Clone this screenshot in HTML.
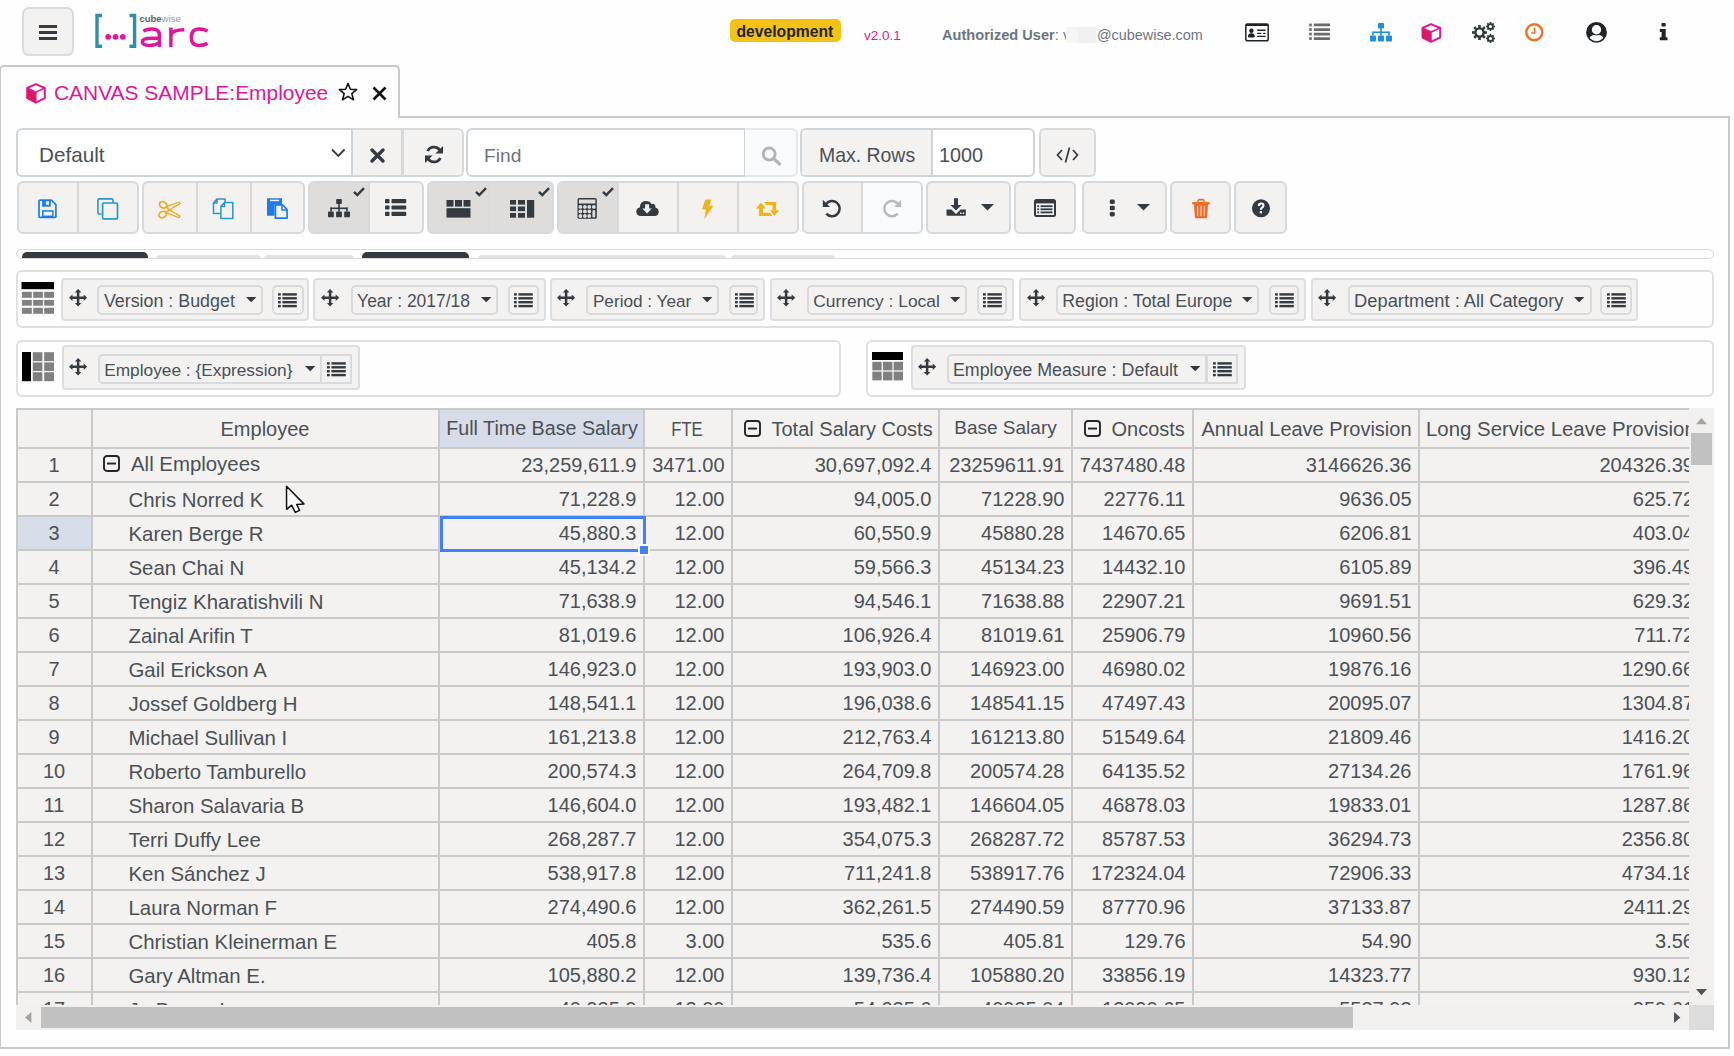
<!DOCTYPE html>
<html><head><meta charset="utf-8">
<style>
*{box-sizing:border-box}
html,body{margin:0;padding:0}
body{width:1734px;height:1056px;overflow:hidden;position:relative;background:#fefefe;font-family:"Liberation Sans",sans-serif;color:#3d4246}
.a{position:absolute}
svg{position:absolute;overflow:visible}
.bg{position:absolute;background:#f3f2f1;border:2px solid #d6d9dc;border-radius:6px}
.dv{position:absolute;top:0;bottom:0;width:2px;background:#d6d9dc}
.act{position:absolute;top:0;bottom:0;background:#dedddc}
.t{position:absolute;white-space:nowrap;line-height:1}
</style></head><body>

<!-- NAVBAR -->
<div class="a" style="left:22px;top:7px;width:52px;height:49px;background:#f3f2f1;border:2px solid #d9dcdf;border-radius:7px"></div>
<div class="a" style="left:39px;top:25px;width:18px;height:3px;background:#343a40"></div>
<div class="a" style="left:39px;top:31px;width:18px;height:3px;background:#343a40"></div>
<div class="a" style="left:39px;top:37px;width:18px;height:3px;background:#343a40"></div>

<!-- logo -->
<svg style="left:0;top:0" width="240" height="60">
  <path d="M102 15.5 H97 V46.3 H102" fill="none" stroke="#2f8fab" stroke-width="3.4"/>
  <path d="M129.5 15.5 H134.6 V46.3 H129.5" fill="none" stroke="#2f8fab" stroke-width="3.4"/>
  <circle cx="108.2" cy="36.8" r="2.9" fill="#e0169c"/>
  <circle cx="115.5" cy="36.8" r="2.9" fill="#e0169c"/>
  <circle cx="122.8" cy="36.8" r="2.9" fill="#e0169c"/>
  <text x="139.5" y="22" font-family="Liberation Sans" font-size="9.5" font-weight="bold" fill="#5d5d5d" textLength="22" lengthAdjust="spacingAndGlyphs">cube</text>
  <text x="161.5" y="22" font-family="Liberation Sans" font-size="9.5" fill="#9a9a9a" textLength="19.5" lengthAdjust="spacingAndGlyphs">wise</text>
  <g fill="none" stroke="#e0169c" stroke-width="3.5">
   <path d="M143.3 31 Q147 29 152 29 Q159.4 29 159.4 35 V47.1"/>
   <path d="M159.4 38.2 H150.5 Q142.3 38.2 142.3 42 Q142.3 45.4 149.5 45.4 Q155.5 45.4 159.4 42.6"/>
   <path d="M170.9 27.6 V47.1"/>
   <path d="M170.9 35 Q172.5 29.8 184.3 29.8"/>
   <path d="M207.6 31 Q204 29 198.7 29 Q191.3 29 191.3 37.3 Q191.3 45.4 198.7 45.4 Q204 45.4 207.6 43.4"/>
  </g>
</svg>

<div class="a" style="left:730px;top:19px;width:111px;height:23px;background:#f4c214;border-radius:5px"></div>
<div class="t" style="left:736.5px;top:24.2px;font-size:15.7px;font-weight:bold;color:#212529">development</div>
<div class="t" style="left:864px;top:28.6px;font-size:13.5px;color:#e0169c">v2.0.1</div>
<div class="t" style="left:942px;top:28px;font-size:14.6px;font-weight:bold;color:#6c757d">Authorized User<span style="font-weight:normal">:</span></div>
<div class="a" style="left:1094.5px;top:31px;width:1.2px;height:9px;background:#9aa0a5"></div>
<div class="t" style="left:1063px;top:28px;font-size:14.4px;color:#6c757d">v</div>
<div class="a" style="left:1066px;top:27px;width:12px;height:16px;background:#f6f5f5"></div>
<div class="a" style="left:1078px;top:27px;width:18px;height:16px;background:#eff0ef"></div>
<div class="t" style="left:1097px;top:28px;font-size:14.4px;color:#6c757d">@cubewise.com</div>

<!-- nav icons -->
<!-- id card -->
<svg style="left:1245px;top:23px" width="24" height="19" viewBox="0 0 24 19">
  <rect x="0.8" y="1.2" width="22.4" height="16.6" rx="1.8" fill="none" stroke="#1f2327" stroke-width="1.5"/>
  <rect x="0.5" y="0.5" width="23" height="2.6" rx="1" fill="#1f2327"/>
  <circle cx="6.4" cy="7.7" r="2.2" fill="#1f2327"/>
  <path d="M3 13.6 Q3 10.2 6.4 10.2 Q9.8 10.2 9.8 13.6 Q9.8 14.6 8.8 14.6 H4 Q3 14.6 3 13.6 Z" fill="#1f2327"/>
  <g fill="#1f2327">
  <rect x="12" y="6.6" width="8.7" height="1.3" rx="0.6"/>
  <rect x="12" y="9.7" width="4.5" height="1.3" rx="0.6"/><rect x="18" y="9.7" width="2.7" height="1.3" rx="0.6"/>
  <rect x="12" y="12.7" width="8.7" height="1.3" rx="0.6"/>
  </g>
</svg>
<!-- list -->
<svg style="left:1309px;top:23px" width="21" height="17" viewBox="0 0 21 17">
  <g fill="#6b6b6b">
  <rect x="0.2" y="0.6" width="2.6" height="2.7"/><rect x="4.8" y="0.6" width="16.2" height="2.7" rx="0.5"/>
  <rect x="0.2" y="5.2" width="2.6" height="2.7"/><rect x="4.8" y="5.2" width="16.2" height="2.7" rx="0.5"/>
  <rect x="0.2" y="9.7" width="2.6" height="2.7"/><rect x="4.8" y="9.7" width="16.2" height="2.7" rx="0.5"/>
  <rect x="0.2" y="14.2" width="2.6" height="2.7"/><rect x="4.8" y="14.2" width="16.2" height="2.7" rx="0.5"/>
  </g>
</svg>
<!-- sitemap blue -->
<svg style="left:1370px;top:23px" width="22" height="19" viewBox="0 0 22 19">
  <g fill="#1e8fe0">
  <rect x="8" y="0" width="6" height="5.5" rx="1"/>
  <rect x="10.2" y="5" width="1.6" height="4"/>
  <rect x="3" y="8.5" width="16" height="1.6"/>
  <rect x="2.2" y="8.5" width="1.6" height="4"/><rect x="10.2" y="8.5" width="1.6" height="4"/><rect x="18.2" y="8.5" width="1.6" height="4"/>
  <rect x="0" y="12.5" width="6" height="6" rx="1"/><rect x="8" y="12.5" width="6" height="6" rx="1"/><rect x="16" y="12.5" width="6" height="6" rx="1"/>
  </g>
</svg>
<!-- cube magenta -->
<svg style="left:1421px;top:23px" width="21" height="20" viewBox="0 0 21 20">
  <path d="M1.5 5 L10 1.2 L19.2 5 L19.2 14.5 L10 18.8 L1.5 14.5 Z" fill="#fff" stroke="#e0169c" stroke-width="2" stroke-linejoin="round"/>
  <path d="M1.5 5 L10 9 L10 18.8 L1.5 14.5 Z" fill="#d81b60"/>
  <path d="M1.5 5 L10 9 L19.2 5 M10 9 V18.8" fill="none" stroke="#e0169c" stroke-width="1.6"/>
</svg>
<!-- gears -->
<svg style="left:1472px;top:22px" width="24" height="21" viewBox="0 0 24 21">
  <g fill="#2f3b34">
  <circle cx="7.5" cy="10.5" r="5.3"/>
  <g stroke="#2f3b34" stroke-width="2.6">
   <line x1="7.5" y1="3" x2="7.5" y2="18"/><line x1="0" y1="10.5" x2="15" y2="10.5"/>
   <line x1="2.2" y1="5.2" x2="12.8" y2="15.8"/><line x1="2.2" y1="15.8" x2="12.8" y2="5.2"/>
  </g>
  <circle cx="18.5" cy="4.5" r="3.3"/><circle cx="18.5" cy="16.5" r="3.3"/>
  <g stroke="#2f3b34" stroke-width="1.7">
   <line x1="18.5" y1="0" x2="18.5" y2="9"/><line x1="14" y1="4.5" x2="23" y2="4.5"/>
   <line x1="15.3" y1="1.3" x2="21.7" y2="7.7"/><line x1="15.3" y1="7.7" x2="21.7" y2="1.3"/>
   <line x1="18.5" y1="12" x2="18.5" y2="21"/><line x1="14" y1="16.5" x2="23" y2="16.5"/>
   <line x1="15.3" y1="13.3" x2="21.7" y2="19.7"/><line x1="15.3" y1="19.7" x2="21.7" y2="13.3"/>
  </g>
  </g>
  <circle cx="7.5" cy="10.5" r="2.9" fill="#fefefe"/>
  <circle cx="18.5" cy="4.5" r="1.6" fill="#fefefe"/>
  <circle cx="18.5" cy="16.5" r="1.6" fill="#fefefe"/>
</svg>
<!-- clock -->
<svg style="left:1525px;top:23px" width="19" height="19" viewBox="0 0 19 19">
  <circle cx="9.3" cy="9.3" r="8" fill="none" stroke="#f07023" stroke-width="2.4"/>
  <path d="M9.6 4.5 V10 H6.2" fill="none" stroke="#f07023" stroke-width="1.7"/>
</svg>
<!-- user -->
<svg style="left:1586px;top:22px" width="22" height="22" viewBox="0 0 22 22">
  <defs><clipPath id="ucl"><circle cx="10.5" cy="10.4" r="8.8"/></clipPath></defs>
  <circle cx="10.5" cy="10.4" r="10.4" fill="#212529"/>
  <ellipse cx="10.5" cy="19.6" rx="8.4" ry="7.1" fill="#fefefe" clip-path="url(#ucl)"/>
  <circle cx="10.5" cy="7.7" r="5.8" fill="#212529"/>
  <circle cx="10.5" cy="7.7" r="4.7" fill="#fefefe"/>
</svg>
<!-- info -->
<svg style="left:1659px;top:23px" width="10" height="18" viewBox="0 0 10 18">
  <g fill="#1f2326">
  <rect x="2.5" y="0" width="4.2" height="3.5" rx="0.8"/>
  <path d="M0.8 6 H6.7 V14.3 H8.5 V17.3 H0.8 V14.3 H2.6 V9 H0.8 Z"/>
  </g>
</svg>

<!-- TAB -->
<div class="a" style="left:-1px;top:65px;width:401px;height:53px;border:2px solid #c9c9c9;border-bottom:none;border-radius:5px 5px 0 0;background:#fefefe"></div>
<!-- PANEL -->
<div class="a" style="left:-1px;top:116px;width:1731px;height:933px;border:2px solid #c9c9c9;border-top:none"></div>
<div class="a" style="left:398px;top:116px;width:1332px;height:2px;background:#c9c9c9"></div>
<!-- tab content -->
<svg style="left:26px;top:83px" width="20" height="21" viewBox="0 0 20 21">
  <path d="M1.2 5 L9.8 1.2 L18.8 5 L18.8 15.2 L9.8 19.6 L1.2 15.2 Z" fill="#fff" stroke="#e0169c" stroke-width="2" stroke-linejoin="round"/>
  <path d="M1.2 5 L9.8 9.2 L9.8 19.6 L1.2 15.2 Z" fill="#d81b60"/>
  <path d="M1.2 5 L9.8 9.2 L18.8 5 M9.8 9.2 V19.6" fill="none" stroke="#e0169c" stroke-width="1.6"/>
</svg>
<div class="t" style="left:54px;top:82.6px;font-size:20.95px;color:#e0169c">CANVAS SAMPLE:Employee</div>
<svg style="left:338px;top:82px" width="20" height="20" viewBox="0 0 20 20">
  <path d="M10 1.5 L12.4 7.3 L18.6 7.6 L13.8 11.6 L15.5 17.8 L10 14.3 L4.5 17.8 L6.2 11.6 L1.4 7.6 L7.6 7.3 Z" fill="none" stroke="#111" stroke-width="1.6" stroke-linejoin="round"/>
</svg>
<svg style="left:372px;top:86px" width="15" height="15" viewBox="0 0 15 15">
  <path d="M1.5 1.5 L13.5 13.5 M13.5 1.5 L1.5 13.5" stroke="#111" stroke-width="2.6"/>
</svg>

<!-- TOOLBAR ROW 1 -->

<!-- select -->
<div class="a" style="left:16px;top:128px;width:337px;height:49px;background:#fff;border:2px solid #cfd4d9;border-radius:6px 0 0 6px"></div>
<div class="t" style="left:39px;top:144.8px;font-size:20.7px;color:#495057">Default</div>
<svg style="left:331px;top:148px" width="15" height="10" viewBox="0 0 15 10"><path d="M1 1.5 L7.3 8 L13.6 1.5" fill="none" stroke="#343a40" stroke-width="1.8"/></svg>
<div class="bg" style="left:351px;top:128px;width:113px;height:49px;border-radius:0 6px 6px 0"></div>
<div class="a" style="left:351px;top:128px;width:2px;height:49px;background:#cfd4d9"></div>
<div class="a" style="left:401px;top:128px;width:3px;height:49px;background:#d6d9dc"></div>
<svg style="left:370px;top:148px" width="15" height="15" viewBox="0 0 15 15"><path d="M2 2 L13 13 M13 2 L2 13" stroke="#343a40" stroke-width="3.4" stroke-linecap="round"/></svg>
<svg style="left:424px;top:145px" width="20" height="19" viewBox="0 0 20 19">
 <path d="M16.6 7.2 A7 7 0 0 0 3.6 6" fill="none" stroke="#343a40" stroke-width="2.8"/>
 <path d="M3.4 11.8 A7 7 0 0 0 16.4 13" fill="none" stroke="#343a40" stroke-width="2.8"/>
 <path d="M19 1 V8.6 H11.4 Z" fill="#343a40"/>
 <path d="M1 18 V10.4 H8.6 Z" fill="#343a40"/>
</svg>
<!-- find -->
<div class="a" style="left:466px;top:128px;width:280px;height:49px;background:#fff;border:2px solid #cfd4d9;border-radius:6px 0 0 6px"></div>
<div class="t" style="left:484px;top:145.7px;font-size:19.2px;color:#6c757d">Find</div>
<div class="a" style="left:745px;top:128px;width:53px;height:49px;background:#f9fafb;border:2px solid #e6e8eb;border-left:none;border-radius:0 6px 6px 0"></div>
<svg style="left:761px;top:146px" width="21" height="19" viewBox="0 0 21 19"><circle cx="8.2" cy="8" r="6" fill="none" stroke="#b3b3b3" stroke-width="2.8"/><path d="M12.5 12.3 L18.5 18" stroke="#b3b3b3" stroke-width="3.2" stroke-linecap="round"/></svg>
<!-- max rows -->
<div class="a" style="left:800px;top:128px;width:235px;height:49px;background:#fff;border:2px solid #cfd4d9;border-radius:6px"></div>
<div class="a" style="left:802px;top:130px;width:129px;height:45px;background:#f3f2f1;border-radius:4px 0 0 4px"></div>
<div class="a" style="left:931px;top:130px;width:2px;height:45px;background:#cfd4d9"></div>
<div class="t" style="left:819px;top:145.8px;font-size:19.45px;color:#495057">Max. Rows</div>
<div class="t" style="left:939px;top:145.5px;font-size:19.8px;color:#4b5055">1000</div>
<div class="bg" style="left:1039px;top:128px;width:57px;height:49px"></div>
<svg style="left:1056px;top:146px" width="23" height="18" viewBox="0 0 23 18"><path d="M6 4 L1.5 9 L6 14 M17 4 L21.5 9 L17 14 M13.5 1.5 L9.5 16.5" fill="none" stroke="#343a40" stroke-width="1.7"/></svg>


<!-- TOOLBAR ROW 2 -->

<!-- group1 save/copy -->
<div class="bg" style="left:17px;top:181px;width:122px;height:53px"></div>
<div class="dv" style="left:77px;top:183px;height:49px"></div>
<svg style="left:38px;top:199px" width="20" height="20" viewBox="0 0 20 20">
 <path d="M2.2 1.1 H13.4 L17.9 5.6 V17.4 Q17.9 18.3 17 18.3 H1.9 Q1 18.3 1 17.4 V2.1 Q1 1.1 2.2 1.1 Z" fill="none" stroke="#1b7cf0" stroke-width="1.7" stroke-linejoin="round"/>
 <path d="M4.1 1.3 H12.8 V7.7 H4.1 Z" fill="#1b7cf0"/>
 <rect x="7.9" y="2.2" width="3.1" height="3.6" fill="#f3f2f1"/>
 <rect x="4.8" y="11.9" width="10.1" height="5.4" fill="none" stroke="#1b7cf0" stroke-width="1.5"/>
</svg>
<svg style="left:97px;top:198px" width="22" height="22" viewBox="0 0 22 22">
 <path d="M4.6 16 H2.3 Q0.9 16 0.9 14.6 V2.3 Q0.9 0.9 2.3 0.9 H14.6 Q16 0.9 16 2.3 V4.8" fill="none" stroke="#2a98c4" stroke-width="1.6"/>
 <rect x="5.6" y="5" width="14.9" height="15.8" rx="1" fill="none" stroke="#2a98c4" stroke-width="1.7"/>
</svg>
<!-- group2 cut/copy/paste -->
<div class="bg" style="left:142px;top:181px;width:163px;height:53px"></div>
<div class="dv" style="left:196px;top:183px;height:49px"></div>
<div class="dv" style="left:250px;top:183px;height:49px"></div>
<svg style="left:157px;top:200px" width="24" height="20" viewBox="0 0 24 20">
 <g fill="none" stroke="#f0a81c" stroke-width="1.7">
 <ellipse cx="6.2" cy="4.8" rx="3.9" ry="3" transform="rotate(28 6.2 4.8)"/>
 <ellipse cx="5.6" cy="14.6" rx="3.9" ry="3" transform="rotate(-28 5.6 14.6)"/>
 <path d="M9.3 6.8 L22 2 L23 3.6 L12 10 Z" stroke-width="1.3" stroke-linejoin="round"/>
 <path d="M9 12.6 L22 17.6 L23 16 L12 9.6 Z" stroke-width="1.3" stroke-linejoin="round"/>
 </g>
</svg>
<svg style="left:212px;top:198px" width="22" height="22" viewBox="0 0 22 22">
 <g fill="none" stroke="#2a98c4" stroke-width="1.5" stroke-linejoin="round">
 <path d="M5 1 H13.1 V4.5 M9 15.5 H1.5 V5 L5 1 V5 H1.5"/>
 <path d="M12 4.6 H20.8 V20.4 H8.9 V8.3 L12.6 4.6 V8.6 H8.9"/>
 </g>
</svg>
<svg style="left:266px;top:198px" width="23" height="22" viewBox="0 0 23 22">
 <path d="M1 0.3 H16 V6.2 H8.5 V17.8 H1 Z" fill="#1b7cf0"/>
 <rect x="4" y="1.7" width="9.2" height="1.5" fill="#f3f2f1"/>
 <path d="M9.4 6.9 H16.5 L21.1 11.5 V20.2 H9.4 Z" fill="#f3f2f1" stroke="#1b7cf0" stroke-width="1.7" stroke-linejoin="round"/>
 <path d="M16 6.9 V12 H21.1" fill="none" stroke="#1b7cf0" stroke-width="1.5"/>
</svg>
<!-- group3 sitemap/list -->
<div class="bg" style="left:308px;top:181px;width:116px;height:53px;overflow:hidden"><div class="act" style="left:0;width:60px"></div></div>
<div class="dv" style="left:368px;top:183px;height:49px"></div>
<svg style="left:328px;top:199px" width="22" height="19" viewBox="0 0 22 19"><g fill="#343a40">
 <rect x="8.2" y="0" width="5.6" height="5" rx="0.8"/><rect x="10.2" y="4.5" width="1.6" height="4.5"/>
 <rect x="2.5" y="8.5" width="17" height="1.6"/>
 <rect x="2.3" y="8.5" width="1.6" height="4"/><rect x="10.2" y="8.5" width="1.6" height="4"/><rect x="18.1" y="8.5" width="1.6" height="4"/>
 <rect x="0" y="12.5" width="5.8" height="5.8" rx="0.8"/><rect x="8.1" y="12.5" width="5.8" height="5.8" rx="0.8"/><rect x="16.2" y="12.5" width="5.8" height="5.8" rx="0.8"/>
</g></svg>
<svg style="left:385px;top:199px" width="22" height="18" viewBox="0 0 22 18"><g fill="#343a40">
 <rect x="0" y="0" width="4.5" height="4.2" rx="0.8"/><rect x="6.5" y="0" width="14.7" height="4.2" rx="0.8"/>
 <rect x="0" y="6.4" width="4.5" height="4.2" rx="0.8"/><rect x="6.5" y="6.4" width="14.7" height="4.2" rx="0.8"/>
 <rect x="0" y="12.8" width="4.5" height="4.2" rx="0.8"/><rect x="6.5" y="12.8" width="14.7" height="4.2" rx="0.8"/>
</g></svg>
<svg style="left:353px;top:187px" width="12" height="10" viewBox="0 0 12 10"><path d="M1 4.8 L4.3 8 L11 1.2" fill="none" stroke="#343a40" stroke-width="2.4"/></svg>
<!-- group4 tables -->
<div class="bg" style="left:427px;top:181px;width:127px;height:53px;background:#dedddc"></div>
<div class="dv" style="left:489px;top:183px;height:49px;background:#d8d8d8;width:1px"></div>
<svg style="left:446px;top:200px" width="26" height="18" viewBox="0 0 26 18"><g fill="#343a40">
 <rect x="0.5" y="0" width="7" height="6.6"/><rect x="9" y="0" width="7" height="6.6"/><rect x="17.5" y="0" width="7" height="6.6"/>
 <rect x="0.5" y="8.2" width="24" height="9.4"/>
</g></svg>
<svg style="left:510px;top:200px" width="26" height="18" viewBox="0 0 26 18"><g fill="#343a40">
 <rect x="0" y="0" width="6" height="4.6"/><rect x="8" y="0" width="7" height="4.6"/>
 <rect x="0" y="6.5" width="6" height="4.6"/><rect x="8" y="6.5" width="7" height="4.6"/>
 <rect x="0" y="13" width="6" height="4.7"/><rect x="8" y="13" width="7" height="4.7"/>
 <rect x="17" y="0" width="7.2" height="17.7"/>
</g></svg>
<svg style="left:475px;top:187px" width="12" height="10" viewBox="0 0 12 10"><path d="M1 4.8 L4.3 8 L11 1.2" fill="none" stroke="#343a40" stroke-width="2.4"/></svg>
<svg style="left:538px;top:187px" width="12" height="10" viewBox="0 0 12 10"><path d="M1 4.8 L4.3 8 L11 1.2" fill="none" stroke="#343a40" stroke-width="2.4"/></svg>
<!-- group5 calc/cloud/bolt/retweet -->
<div class="bg" style="left:557px;top:181px;width:242px;height:53px;overflow:hidden"><div class="act" style="left:0;width:60px"></div></div>
<div class="dv" style="left:617px;top:183px;height:49px"></div>
<div class="dv" style="left:677px;top:183px;height:49px"></div>
<div class="dv" style="left:737px;top:183px;height:49px"></div>
<svg style="left:577px;top:198px" width="20" height="21" viewBox="0 0 20 21">
 <rect x="0.5" y="0.1" width="19.3" height="20.7" rx="1.6" fill="#343a40"/>
 <rect x="1.9" y="1.5" width="16.5" height="4" fill="#dedddc"/>
 <g fill="#dedddc">
 <circle cx="3.4" cy="8.9" r="1.9"/><circle cx="7.9" cy="8.9" r="1.9"/><circle cx="12.3" cy="8.9" r="1.9"/><circle cx="16.8" cy="8.9" r="1.9"/>
 <circle cx="3.4" cy="13.4" r="1.9"/><circle cx="7.9" cy="13.4" r="1.9"/><circle cx="12.3" cy="13.4" r="1.9"/>
 <circle cx="3.4" cy="18" r="1.9"/><circle cx="7.9" cy="18" r="1.9"/><circle cx="12.3" cy="18" r="1.9"/>
 <rect x="15.4" y="12" width="2.8" height="7.6" rx="1.4"/>
 </g>
</svg>
<svg style="left:602px;top:187px" width="12" height="10" viewBox="0 0 12 10"><path d="M1 4.8 L4.3 8 L11 1.2" fill="none" stroke="#343a40" stroke-width="2.4"/></svg>
<svg style="left:636px;top:199px" width="23" height="18" viewBox="0 0 23 18">
 <path d="M5 17 Q0.3 17 0.3 12.6 Q0.3 9 3.8 8.4 Q4 3 9 2 Q13.5 1.3 15.6 5.2 Q17 4.4 18.3 5.2 Q19.8 6.4 19.4 8.4 Q22.7 9.4 22.7 12.8 Q22.7 17 18.2 17 Z" fill="#343a40"/>
 <path d="M9.1 5.2 H13.1 V9.4 H15.9 L11.1 14.4 L6.3 9.4 H9.1 Z" fill="#f3f2f1"/>
</svg>
<svg style="left:701px;top:199px" width="13" height="21" viewBox="0 0 13 21">
 <path d="M4.4 0.5 H10.5 L8.2 6.8 H12.5 L3.2 20.5 L5 10.4 H1 Z" fill="#f0b321"/>
</svg>
<svg style="left:756px;top:201px" width="24" height="16" viewBox="0 0 24 16"><g fill="#f2b218">
 <path d="M0 7.6 H9.9 L4.9 1.4 Z"/>
 <path d="M3.1 7 H6.9 V11.8 H14.2 L16.1 15.1 H3.1 Z"/>
 <path d="M7.9 1 H20.1 V9.5 H16.5 V4.1 H10.6 Z"/>
 <path d="M14 9.2 H23.1 L18.5 14.9 Z"/>
</g></svg>
<!-- group6 undo/redo -->
<div class="bg" style="left:802px;top:181px;width:121px;height:53px;overflow:hidden"><div class="a" style="left:59px;top:0;bottom:0;right:0;background:#f9fafb"></div></div>
<div class="dv" style="left:861px;top:183px;height:49px"></div>
<svg style="left:822px;top:199px" width="20" height="19" viewBox="0 0 20 19">
 <path d="M4 5 A7.6 7.6 0 1 1 4.3 14.6" fill="none" stroke="#343a40" stroke-width="2.5"/>
 <path d="M0.8 0.8 V8 H8 Z" fill="#343a40"/>
</svg>
<svg style="left:882px;top:199px" width="20" height="19" viewBox="0 0 20 19">
 <path d="M16 5 A7.6 7.6 0 1 0 15.7 14.6" fill="none" stroke="#b9b9b9" stroke-width="2.5"/>
 <path d="M19.2 0.8 V8 H12 Z" fill="#b9b9b9"/>
</svg>
<!-- group7 download -->
<div class="bg" style="left:926px;top:181px;width:85px;height:53px"></div>
<svg style="left:946px;top:198px" width="21" height="19" viewBox="0 0 21 19">
 <path d="M8 0.3 H12 V7 H15.5 L10 12.5 L4.5 7 H8 Z" fill="#343a40"/>
 <path d="M0.5 11.5 H5.5 L10 16 L14.5 11.5 H19.8 V17 Q19.8 17.8 19 17.8 H1.3 Q0.5 17.8 0.5 17 Z" fill="#343a40"/>
 <rect x="14" y="14.5" width="1.5" height="1.5" fill="#f3f2f1"/><rect x="16.6" y="14.5" width="1.5" height="1.5" fill="#f3f2f1"/>
</svg>
<svg style="left:981px;top:204px" width="14" height="7" viewBox="0 0 14 7"><path d="M0 0 H13 L6.5 6.5 Z" fill="#343a40"/></svg>
<!-- group8 list-alt -->
<div class="bg" style="left:1014px;top:181px;width:62px;height:53px"></div>
<svg style="left:1034px;top:199px" width="22" height="18" viewBox="0 0 22 18">
 <rect x="1" y="1" width="20" height="16" rx="1.5" fill="none" stroke="#343a40" stroke-width="2"/>
 <rect x="1" y="1" width="20" height="3.4" fill="#343a40"/>
 <g fill="#343a40"><rect x="3.3" y="6.3" width="1.8" height="1.8"/><rect x="6.5" y="6.3" width="12" height="1.8"/>
 <rect x="3.3" y="9.4" width="1.8" height="1.8"/><rect x="6.5" y="9.4" width="12" height="1.8"/>
 <rect x="3.3" y="12.5" width="1.8" height="1.8"/><rect x="6.5" y="12.5" width="12" height="1.8"/></g>
</svg>
<!-- group9 ellipsis -->
<div class="bg" style="left:1082px;top:181px;width:85px;height:53px"></div>
<svg style="left:1109px;top:199px" width="7" height="18" viewBox="0 0 7 18"><g fill="#343a40">
 <rect x="0.8" y="0.5" width="5" height="4.6" rx="1.4"/><rect x="0.8" y="6.7" width="5" height="4.6" rx="1.4"/><rect x="0.8" y="12.9" width="5" height="4.6" rx="1.4"/>
</g></svg>
<svg style="left:1137px;top:204px" width="14" height="7" viewBox="0 0 14 7"><path d="M0 0 H13 L6.5 6.5 Z" fill="#343a40"/></svg>
<!-- trash -->
<div class="bg" style="left:1170px;top:181px;width:61px;height:53px"></div>
<svg style="left:1192px;top:199px" width="18" height="20" viewBox="0 0 18 20">
 <path d="M6 2.8 V2 Q6 0.6 7.4 0.6 H10.6 Q12 0.6 12 2 V2.8" fill="none" stroke="#ef6c28" stroke-width="1.6"/>
 <rect x="0.2" y="3" width="17.5" height="2.4" fill="#ef6c28"/>
 <path d="M2 5 H16 L15.2 18 Q15.1 19.2 14 19.2 H4 Q2.9 19.2 2.8 18 Z" fill="#ef6c28"/>
 <g fill="#f7c7a8"><rect x="5" y="7" width="1.3" height="10"/><rect x="8.3" y="7" width="1.3" height="10"/><rect x="11.6" y="7" width="1.3" height="10"/></g>
</svg>
<!-- help -->
<div class="bg" style="left:1234px;top:181px;width:53px;height:53px"></div>
<svg style="left:1251px;top:199px" width="20" height="20" viewBox="0 0 20 20">
 <circle cx="10" cy="9.3" r="9" fill="#343a40"/>
 <path d="M6.8 7 Q6.8 3.6 10.2 3.6 Q13.5 3.6 13.5 6.6 Q13.5 8.5 11.5 9.4 Q10.9 9.8 10.9 10.8 H8.9 Q8.9 8.8 10.2 8.1 Q11.4 7.4 11.4 6.6 Q11.4 5.5 10.1 5.5 Q8.9 5.5 8.8 7 Z" fill="#fff"/>
 <rect x="8.8" y="12" width="2.2" height="2.3" fill="#fff"/>
</svg>


<!-- FILTERS -->
<div class="a" style="left:16px;top:249px;width:1698px;height:10px;border:1.8px solid #dadada;border-radius:5px;overflow:hidden"><div class="a" style="left:4.5px;top:2.4px;width:126px;height:12px;background:#343a40;border-radius:5px 5px 0 0"></div><div class="a" style="left:138.5px;top:4.5px;width:105px;height:12px;background:#e2e2e2;border-radius:4px 4px 0 0"></div><div class="a" style="left:247px;top:4.5px;width:90px;height:12px;background:#e2e2e2;border-radius:4px 4px 0 0"></div><div class="a" style="left:344.5px;top:2.4px;width:107.5px;height:12px;background:#343a40;border-radius:5px 5px 0 0"></div><div class="a" style="left:460.5px;top:4.5px;width:248px;height:12px;background:#e2e2e2;border-radius:4px 4px 0 0"></div><div class="a" style="left:713.5px;top:4.5px;width:104px;height:12px;background:#e2e2e2;border-radius:4px 4px 0 0"></div></div>
<div class="a" style="left:16px;top:270px;width:1698px;height:58px;border:2px solid #e0e0e0;border-radius:6px"></div>
<svg style="left:21px;top:282px" width="34" height="33" viewBox="0 0 34 33">
 <rect x="0.5" y="0" width="32.5" height="7.2" fill="#000"/>
 <g fill="#808080">
 <rect x="1" y="9.8" width="9.8" height="6"/><rect x="12.2" y="9.8" width="9.7" height="6"/><rect x="23.2" y="9.8" width="9.8" height="6"/>
 <rect x="1" y="17.9" width="9.8" height="5.8"/><rect x="12.2" y="17.9" width="9.7" height="5.8"/><rect x="23.2" y="17.9" width="9.8" height="5.8"/>
 <rect x="1" y="25.8" width="9.8" height="6"/><rect x="12.2" y="25.8" width="9.7" height="6"/><rect x="23.2" y="25.8" width="9.8" height="6"/>
 </g></svg>
<div class="bg" style="left:61.4px;top:277.5px;width:247.6px;height:43.2px;border-color:#dcdee1;border-radius:4px"></div>
<svg style="left:69.2px;top:288.8px" width="19" height="18" viewBox="0 0 19 18"><g fill="#343a40">
 <path d="M9.1 0 L12.4 3.5 H10.35 V7.6 H14.7 V5.5 L18.2 8.8 L14.7 12.1 V10 H10.35 V14.1 H12.4 L9.1 17.6 L5.8 14.1 H7.85 V10 H3.5 V12.1 L0 8.8 L3.5 5.5 V7.6 H7.85 V3.5 H5.8 Z"/></g></svg>
<div class="bg" style="left:97.4px;top:285.4px;width:166.1px;height:29.6px;border-color:#d8dbde;border-radius:5px"></div>
<div class="t" style="left:103.9px;top:292.8px;font-size:17.85px;color:#495057">Version : Budget</div>
<svg style="left:246.0px;top:296.8px" width="11" height="6" viewBox="0 0 11 6"><path d="M0 0 H10.4 L5.2 5.2 Z" fill="#343a40"/></svg>
<div class="bg" style="left:272.1px;top:285.4px;width:31.7px;height:29.6px;border-color:#d8dbde;border-radius:5px"></div>
<svg style="left:278.3px;top:292.6px" width="19" height="15" viewBox="0 0 19 15"><g fill="#343a40">
 <rect x="0" y="0.2" width="2.8" height="2.4"/><rect x="4.4" y="0.2" width="14.4" height="2.4"/>
 <rect x="0" y="4.1" width="2.8" height="2.4"/><rect x="4.4" y="4.1" width="14.4" height="2.4"/>
 <rect x="0" y="8" width="2.8" height="2.4"/><rect x="4.4" y="8" width="14.4" height="2.4"/>
 <rect x="0" y="11.9" width="2.8" height="2.4"/><rect x="4.4" y="11.9" width="14.4" height="2.4"/>
</g></svg>
<div class="bg" style="left:313.4px;top:277.5px;width:232.3px;height:43.2px;border-color:#dcdee1;border-radius:4px"></div>
<svg style="left:321.2px;top:288.8px" width="19" height="18" viewBox="0 0 19 18"><g fill="#343a40">
 <path d="M9.1 0 L12.4 3.5 H10.35 V7.6 H14.7 V5.5 L18.2 8.8 L14.7 12.1 V10 H10.35 V14.1 H12.4 L9.1 17.6 L5.8 14.1 H7.85 V10 H3.5 V12.1 L0 8.8 L3.5 5.5 V7.6 H7.85 V3.5 H5.8 Z"/></g></svg>
<div class="bg" style="left:350.6px;top:285.4px;width:147.9px;height:29.6px;border-color:#d8dbde;border-radius:5px"></div>
<div class="t" style="left:357.1px;top:293.1px;font-size:17.47px;color:#495057">Year : 2017/18</div>
<svg style="left:481.0px;top:296.8px" width="11" height="6" viewBox="0 0 11 6"><path d="M0 0 H10.4 L5.2 5.2 Z" fill="#343a40"/></svg>
<div class="bg" style="left:507.6px;top:285.4px;width:31.0px;height:29.6px;border-color:#d8dbde;border-radius:5px"></div>
<svg style="left:513.8px;top:292.6px" width="19" height="15" viewBox="0 0 19 15"><g fill="#343a40">
 <rect x="0" y="0.2" width="2.8" height="2.4"/><rect x="4.4" y="0.2" width="14.4" height="2.4"/>
 <rect x="0" y="4.1" width="2.8" height="2.4"/><rect x="4.4" y="4.1" width="14.4" height="2.4"/>
 <rect x="0" y="8" width="2.8" height="2.4"/><rect x="4.4" y="8" width="14.4" height="2.4"/>
 <rect x="0" y="11.9" width="2.8" height="2.4"/><rect x="4.4" y="11.9" width="14.4" height="2.4"/>
</g></svg>
<div class="bg" style="left:549.5px;top:277.5px;width:215.9px;height:43.2px;border-color:#dcdee1;border-radius:4px"></div>
<svg style="left:557.3px;top:288.8px" width="19" height="18" viewBox="0 0 19 18"><g fill="#343a40">
 <path d="M9.1 0 L12.4 3.5 H10.35 V7.6 H14.7 V5.5 L18.2 8.8 L14.7 12.1 V10 H10.35 V14.1 H12.4 L9.1 17.6 L5.8 14.1 H7.85 V10 H3.5 V12.1 L0 8.8 L3.5 5.5 V7.6 H7.85 V3.5 H5.8 Z"/></g></svg>
<div class="bg" style="left:586.4px;top:285.4px;width:132.6px;height:29.6px;border-color:#d8dbde;border-radius:5px"></div>
<div class="t" style="left:592.9px;top:293.3px;font-size:17.21px;color:#495057">Period : Year</div>
<svg style="left:701.5px;top:296.8px" width="11" height="6" viewBox="0 0 11 6"><path d="M0 0 H10.4 L5.2 5.2 Z" fill="#343a40"/></svg>
<div class="bg" style="left:728.6px;top:285.4px;width:29.7px;height:29.6px;border-color:#d8dbde;border-radius:5px"></div>
<svg style="left:734.8px;top:292.6px" width="19" height="15" viewBox="0 0 19 15"><g fill="#343a40">
 <rect x="0" y="0.2" width="2.8" height="2.4"/><rect x="4.4" y="0.2" width="14.4" height="2.4"/>
 <rect x="0" y="4.1" width="2.8" height="2.4"/><rect x="4.4" y="4.1" width="14.4" height="2.4"/>
 <rect x="0" y="8" width="2.8" height="2.4"/><rect x="4.4" y="8" width="14.4" height="2.4"/>
 <rect x="0" y="11.9" width="2.8" height="2.4"/><rect x="4.4" y="11.9" width="14.4" height="2.4"/>
</g></svg>
<div class="bg" style="left:769.5px;top:277.5px;width:244.8px;height:43.2px;border-color:#dcdee1;border-radius:4px"></div>
<svg style="left:777.3px;top:288.8px" width="19" height="18" viewBox="0 0 19 18"><g fill="#343a40">
 <path d="M9.1 0 L12.4 3.5 H10.35 V7.6 H14.7 V5.5 L18.2 8.8 L14.7 12.1 V10 H10.35 V14.1 H12.4 L9.1 17.6 L5.8 14.1 H7.85 V10 H3.5 V12.1 L0 8.8 L3.5 5.5 V7.6 H7.85 V3.5 H5.8 Z"/></g></svg>
<div class="bg" style="left:806.7px;top:285.4px;width:160.6px;height:29.6px;border-color:#d8dbde;border-radius:5px"></div>
<div class="t" style="left:813.2px;top:293.2px;font-size:17.4px;color:#495057">Currency : Local</div>
<svg style="left:949.8px;top:296.8px" width="11" height="6" viewBox="0 0 11 6"><path d="M0 0 H10.4 L5.2 5.2 Z" fill="#343a40"/></svg>
<div class="bg" style="left:976.6px;top:285.4px;width:30.8px;height:29.6px;border-color:#d8dbde;border-radius:5px"></div>
<svg style="left:982.8px;top:292.6px" width="19" height="15" viewBox="0 0 19 15"><g fill="#343a40">
 <rect x="0" y="0.2" width="2.8" height="2.4"/><rect x="4.4" y="0.2" width="14.4" height="2.4"/>
 <rect x="0" y="4.1" width="2.8" height="2.4"/><rect x="4.4" y="4.1" width="14.4" height="2.4"/>
 <rect x="0" y="8" width="2.8" height="2.4"/><rect x="4.4" y="8" width="14.4" height="2.4"/>
 <rect x="0" y="11.9" width="2.8" height="2.4"/><rect x="4.4" y="11.9" width="14.4" height="2.4"/>
</g></svg>
<div class="bg" style="left:1018.7px;top:277.5px;width:287.5px;height:43.2px;border-color:#dcdee1;border-radius:4px"></div>
<svg style="left:1026.5px;top:288.8px" width="19" height="18" viewBox="0 0 19 18"><g fill="#343a40">
 <path d="M9.1 0 L12.4 3.5 H10.35 V7.6 H14.7 V5.5 L18.2 8.8 L14.7 12.1 V10 H10.35 V14.1 H12.4 L9.1 17.6 L5.8 14.1 H7.85 V10 H3.5 V12.1 L0 8.8 L3.5 5.5 V7.6 H7.85 V3.5 H5.8 Z"/></g></svg>
<div class="bg" style="left:1055.8px;top:285.4px;width:203.3px;height:29.6px;border-color:#d8dbde;border-radius:5px"></div>
<div class="t" style="left:1062.3px;top:292.9px;font-size:17.72px;color:#495057">Region : Total Europe</div>
<svg style="left:1241.6px;top:296.8px" width="11" height="6" viewBox="0 0 11 6"><path d="M0 0 H10.4 L5.2 5.2 Z" fill="#343a40"/></svg>
<div class="bg" style="left:1268.7px;top:285.4px;width:30.6px;height:29.6px;border-color:#d8dbde;border-radius:5px"></div>
<svg style="left:1274.9px;top:292.6px" width="19" height="15" viewBox="0 0 19 15"><g fill="#343a40">
 <rect x="0" y="0.2" width="2.8" height="2.4"/><rect x="4.4" y="0.2" width="14.4" height="2.4"/>
 <rect x="0" y="4.1" width="2.8" height="2.4"/><rect x="4.4" y="4.1" width="14.4" height="2.4"/>
 <rect x="0" y="8" width="2.8" height="2.4"/><rect x="4.4" y="8" width="14.4" height="2.4"/>
 <rect x="0" y="11.9" width="2.8" height="2.4"/><rect x="4.4" y="11.9" width="14.4" height="2.4"/>
</g></svg>
<div class="bg" style="left:1310.5px;top:277.5px;width:327.4px;height:43.2px;border-color:#dcdee1;border-radius:4px"></div>
<svg style="left:1318.3px;top:288.8px" width="19" height="18" viewBox="0 0 19 18"><g fill="#343a40">
 <path d="M9.1 0 L12.4 3.5 H10.35 V7.6 H14.7 V5.5 L18.2 8.8 L14.7 12.1 V10 H10.35 V14.1 H12.4 L9.1 17.6 L5.8 14.1 H7.85 V10 H3.5 V12.1 L0 8.8 L3.5 5.5 V7.6 H7.85 V3.5 H5.8 Z"/></g></svg>
<div class="bg" style="left:1347.6px;top:285.4px;width:244.0px;height:29.6px;border-color:#d8dbde;border-radius:5px"></div>
<div class="t" style="left:1354.1px;top:292.4px;font-size:18.3px;color:#495057">Department : All Category</div>
<svg style="left:1574.1px;top:296.8px" width="11" height="6" viewBox="0 0 11 6"><path d="M0 0 H10.4 L5.2 5.2 Z" fill="#343a40"/></svg>
<div class="bg" style="left:1600.4px;top:285.4px;width:31.3px;height:29.6px;border-color:#d8dbde;border-radius:5px"></div>
<svg style="left:1606.6px;top:292.6px" width="19" height="15" viewBox="0 0 19 15"><g fill="#343a40">
 <rect x="0" y="0.2" width="2.8" height="2.4"/><rect x="4.4" y="0.2" width="14.4" height="2.4"/>
 <rect x="0" y="4.1" width="2.8" height="2.4"/><rect x="4.4" y="4.1" width="14.4" height="2.4"/>
 <rect x="0" y="8" width="2.8" height="2.4"/><rect x="4.4" y="8" width="14.4" height="2.4"/>
 <rect x="0" y="11.9" width="2.8" height="2.4"/><rect x="4.4" y="11.9" width="14.4" height="2.4"/>
</g></svg>
<div class="a" style="left:16px;top:339.5px;width:825px;height:57px;border:2px solid #e0e0e0;border-radius:6px"></div>
<svg style="left:22px;top:351.5px" width="33" height="30" viewBox="0 0 33 30">
 <rect x="0" y="0" width="9" height="29.2" fill="#000"/>
 <g fill="#808080">
 <rect x="10.8" y="0.2" width="9.6" height="9"/><rect x="22.2" y="0.2" width="9.8" height="9"/>
 <rect x="10.8" y="10.4" width="9.6" height="8.6"/><rect x="22.2" y="10.4" width="9.8" height="8.6"/>
 <rect x="10.8" y="20.2" width="9.6" height="9"/><rect x="22.2" y="20.2" width="9.8" height="9"/>
 </g></svg>
<div class="bg" style="left:61.5px;top:345.2px;width:298px;height:44.5px;border-color:#dcdee1;border-radius:4px"></div>
<svg style="left:69.3px;top:357.8px" width="19" height="18" viewBox="0 0 19 18"><g fill="#343a40">
 <path d="M9.1 0 L12.4 3.5 H10.35 V7.6 H14.7 V5.5 L18.2 8.8 L14.7 12.1 V10 H10.35 V14.1 H12.4 L9.1 17.6 L5.8 14.1 H7.85 V10 H3.5 V12.1 L0 8.8 L3.5 5.5 V7.6 H7.85 V3.5 H5.8 Z"/></g></svg>
<div class="bg" style="left:97.6px;top:354.1px;width:224.4px;height:29.7px;border-color:#d8dbde;border-radius:5px 0 0 5px"></div>
<div class="t" style="left:104.2px;top:362.4px;font-size:17.3px;color:#495057">Employee : {Expression}</div>
<svg style="left:304.5px;top:365.8px" width="11" height="6" viewBox="0 0 11 6"><path d="M0 0 H10.4 L5.2 5.2 Z" fill="#343a40"/></svg>
<div class="bg" style="left:320px;top:354.1px;width:32px;height:29.7px;border-color:#d8dbde;border-radius:0"></div>
<svg style="left:326.5px;top:361.8px" width="19" height="15" viewBox="0 0 19 15"><g fill="#343a40">
 <rect x="0" y="0.2" width="2.8" height="2.4"/><rect x="4.4" y="0.2" width="14.4" height="2.4"/>
 <rect x="0" y="4.1" width="2.8" height="2.4"/><rect x="4.4" y="4.1" width="14.4" height="2.4"/>
 <rect x="0" y="8" width="2.8" height="2.4"/><rect x="4.4" y="8" width="14.4" height="2.4"/>
 <rect x="0" y="11.9" width="2.8" height="2.4"/><rect x="4.4" y="11.9" width="14.4" height="2.4"/>
</g></svg>
<div class="a" style="left:865.5px;top:339.5px;width:848.5px;height:57px;border:2px solid #e0e0e0;border-radius:6px"></div>
<svg style="left:871.5px;top:352.3px" width="32" height="29" viewBox="0 0 32 29">
 <rect x="0" y="0" width="31" height="8" fill="#000"/>
 <g fill="#808080">
 <rect x="0.3" y="9.8" width="9.4" height="8.6"/><rect x="11" y="9.8" width="9.4" height="8.6"/><rect x="21.6" y="9.8" width="9.4" height="8.6"/>
 <rect x="0.3" y="19.6" width="9.4" height="8.8"/><rect x="11" y="19.6" width="9.4" height="8.8"/><rect x="21.6" y="19.6" width="9.4" height="8.8"/>
 </g></svg>
<div class="bg" style="left:910.6px;top:345.2px;width:335px;height:44.5px;border-color:#dcdee1;border-radius:4px"></div>
<svg style="left:918.3px;top:357.8px" width="19" height="18" viewBox="0 0 19 18"><g fill="#343a40">
 <path d="M9.1 0 L12.4 3.5 H10.35 V7.6 H14.7 V5.5 L18.2 8.8 L14.7 12.1 V10 H10.35 V14.1 H12.4 L9.1 17.6 L5.8 14.1 H7.85 V10 H3.5 V12.1 L0 8.8 L3.5 5.5 V7.6 H7.85 V3.5 H5.8 Z"/></g></svg>
<div class="bg" style="left:946.9px;top:354.1px;width:260px;height:29.7px;border-color:#d8dbde;border-radius:5px 0 0 5px"></div>
<div class="t" style="left:952.9px;top:361.9px;font-size:17.85px;color:#495057">Employee Measure : Default</div>
<svg style="left:1189.5px;top:365.8px" width="11" height="6" viewBox="0 0 11 6"><path d="M0 0 H10.4 L5.2 5.2 Z" fill="#343a40"/></svg>
<div class="bg" style="left:1205.5px;top:354.1px;width:32px;height:29.7px;border-color:#d8dbde;border-radius:0"></div>
<svg style="left:1212.5px;top:361.8px" width="19" height="15" viewBox="0 0 19 15"><g fill="#343a40">
 <rect x="0" y="0.2" width="2.8" height="2.4"/><rect x="4.4" y="0.2" width="14.4" height="2.4"/>
 <rect x="0" y="4.1" width="2.8" height="2.4"/><rect x="4.4" y="4.1" width="14.4" height="2.4"/>
 <rect x="0" y="8" width="2.8" height="2.4"/><rect x="4.4" y="8" width="14.4" height="2.4"/>
 <rect x="0" y="11.9" width="2.8" height="2.4"/><rect x="4.4" y="11.9" width="14.4" height="2.4"/>
</g></svg>
<!-- GRID -->
<div class="a" style="left:16px;top:408px;width:1673px;height:597px;background:#f3f2f1;overflow:hidden">
<div class="a" style="left:424px;top:2px;width:203px;height:37px;background:#d6dde9"></div>
<div class="a" style="left:2px;top:109px;width:73px;height:32px;background:#d6dde9"></div>
<div class="a" style="left:0px;top:0;width:2px;height:597px;background:#c9c9c9"></div>
<div class="a" style="left:75px;top:0;width:2px;height:597px;background:#c9c9c9"></div>
<div class="a" style="left:422px;top:0;width:2px;height:597px;background:#c9c9c9"></div>
<div class="a" style="left:627px;top:0;width:2px;height:597px;background:#c9c9c9"></div>
<div class="a" style="left:715px;top:0;width:2px;height:597px;background:#c9c9c9"></div>
<div class="a" style="left:922px;top:0;width:2px;height:597px;background:#c9c9c9"></div>
<div class="a" style="left:1055px;top:0;width:2px;height:597px;background:#c9c9c9"></div>
<div class="a" style="left:1176px;top:0;width:2px;height:597px;background:#c9c9c9"></div>
<div class="a" style="left:1402px;top:0;width:2px;height:597px;background:#c9c9c9"></div>
<div class="a" style="left:0;top:0px;width:1673px;height:2px;background:#c9c9c9"></div>
<div class="a" style="left:0;top:39px;width:1673px;height:2px;background:#c9c9c9"></div>
<div class="a" style="left:0;top:73px;width:1673px;height:2px;background:#c9c9c9"></div>
<div class="a" style="left:0;top:107px;width:1673px;height:2px;background:#c9c9c9"></div>
<div class="a" style="left:0;top:141px;width:1673px;height:2px;background:#c9c9c9"></div>
<div class="a" style="left:0;top:175px;width:1673px;height:2px;background:#c9c9c9"></div>
<div class="a" style="left:0;top:209px;width:1673px;height:2px;background:#c9c9c9"></div>
<div class="a" style="left:0;top:243px;width:1673px;height:2px;background:#c9c9c9"></div>
<div class="a" style="left:0;top:277px;width:1673px;height:2px;background:#c9c9c9"></div>
<div class="a" style="left:0;top:311px;width:1673px;height:2px;background:#c9c9c9"></div>
<div class="a" style="left:0;top:345px;width:1673px;height:2px;background:#c9c9c9"></div>
<div class="a" style="left:0;top:379px;width:1673px;height:2px;background:#c9c9c9"></div>
<div class="a" style="left:0;top:413px;width:1673px;height:2px;background:#c9c9c9"></div>
<div class="a" style="left:0;top:447px;width:1673px;height:2px;background:#c9c9c9"></div>
<div class="a" style="left:0;top:481px;width:1673px;height:2px;background:#c9c9c9"></div>
<div class="a" style="left:0;top:515px;width:1673px;height:2px;background:#c9c9c9"></div>
<div class="a" style="left:0;top:549px;width:1673px;height:2px;background:#c9c9c9"></div>
<div class="a" style="left:0;top:583px;width:1673px;height:2px;background:#c9c9c9"></div>
<div class="t" style="left:-51.0px;width:600px;text-align:center;top:11.0px;font-size:20px;color:#4b5055">Employee</div>
<div class="t" style="left:226.0px;width:600px;text-align:center;top:11.3px;font-size:19.7px;color:#4b5055">Full Time Base Salary</div>
<div class="t" style="left:371.0px;width:600px;text-align:center;top:11.0px;font-size:20px;color:#4b5055;transform:scaleX(0.83)">FTE</div>
<svg style="left:728px;top:12px" width="17" height="17" viewBox="0 0 17 17"><rect x="1" y="1" width="15" height="15" rx="3" fill="none" stroke="#212529" stroke-width="1.9"/><rect x="4" y="7.6" width="9" height="1.9" fill="#212529"/></svg>
<div class="t" style="left:755.5px;top:11.0px;font-size:20px;color:#4b5055">Total Salary Costs</div>
<div class="t" style="left:689.5px;width:600px;text-align:center;top:10.4px;font-size:19px;color:#4b5055">Base Salary</div>
<svg style="left:1068px;top:12px" width="17" height="17" viewBox="0 0 17 17"><rect x="1" y="1" width="15" height="15" rx="3" fill="none" stroke="#212529" stroke-width="1.9"/><rect x="4" y="7.6" width="9" height="1.9" fill="#212529"/></svg>
<div class="t" style="left:1095.5px;top:11.0px;font-size:20px;color:#4b5055">Oncosts</div>
<div class="t" style="left:990.5px;width:600px;text-align:center;top:11.0px;font-size:20px;color:#4b5055">Annual Leave Provision</div>
<div class="t" style="left:1410.0px;top:10.9px;font-size:20.4px;color:#4b5055">Long Service Leave Provision</div>
<div class="t" style="left:-262.0px;width:600px;text-align:center;top:46.6px;font-size:20px;color:#4b5055">1</div>
<svg style="left:87px;top:47px" width="17" height="17" viewBox="0 0 17 17"><rect x="1" y="1" width="15" height="15" rx="3" fill="none" stroke="#212529" stroke-width="1.9"/><rect x="4" y="7.6" width="9" height="1.9" fill="#212529"/></svg>
<div class="t" style="left:115.0px;top:46.26px;font-size:20.4px;color:#4b5055">All Employees</div>
<div class="t" style="left:220.5px;width:400px;text-align:right;top:46.6px;font-size:20px;color:#4b5055">23,259,611.9</div>
<div class="t" style="left:308.5px;width:400px;text-align:right;top:46.6px;font-size:20px;color:#4b5055">3471.00</div>
<div class="t" style="left:515.5px;width:400px;text-align:right;top:46.6px;font-size:20px;color:#4b5055">30,697,092.4</div>
<div class="t" style="left:648.5px;width:400px;text-align:right;top:46.6px;font-size:20px;color:#4b5055">23259611.91</div>
<div class="t" style="left:769.5px;width:400px;text-align:right;top:46.6px;font-size:20px;color:#4b5055">7437480.48</div>
<div class="t" style="left:995.5px;width:400px;text-align:right;top:46.6px;font-size:20px;color:#4b5055">3146626.36</div>
<div class="t" style="left:1278.0px;width:400px;text-align:right;top:46.6px;font-size:20px;color:#4b5055">204326.39</div>
<div class="t" style="left:-262.0px;width:600px;text-align:center;top:80.6px;font-size:20px;color:#4b5055">2</div>
<div class="t" style="left:112.5px;top:81.76px;font-size:20.4px;color:#4b5055">Chris Norred K</div>
<div class="t" style="left:220.5px;width:400px;text-align:right;top:80.6px;font-size:20px;color:#4b5055">71,228.9</div>
<div class="t" style="left:308.5px;width:400px;text-align:right;top:80.6px;font-size:20px;color:#4b5055">12.00</div>
<div class="t" style="left:515.5px;width:400px;text-align:right;top:80.6px;font-size:20px;color:#4b5055">94,005.0</div>
<div class="t" style="left:648.5px;width:400px;text-align:right;top:80.6px;font-size:20px;color:#4b5055">71228.90</div>
<div class="t" style="left:769.5px;width:400px;text-align:right;top:80.6px;font-size:20px;color:#4b5055">22776.11</div>
<div class="t" style="left:995.5px;width:400px;text-align:right;top:80.6px;font-size:20px;color:#4b5055">9636.05</div>
<div class="t" style="left:1278.0px;width:400px;text-align:right;top:80.6px;font-size:20px;color:#4b5055">625.72</div>
<div class="t" style="left:-262.0px;width:600px;text-align:center;top:114.6px;font-size:20px;color:#4b5055">3</div>
<div class="t" style="left:112.5px;top:115.76px;font-size:20.4px;color:#4b5055">Karen Berge R</div>
<div class="t" style="left:220.5px;width:400px;text-align:right;top:114.6px;font-size:20px;color:#4b5055">45,880.3</div>
<div class="t" style="left:308.5px;width:400px;text-align:right;top:114.6px;font-size:20px;color:#4b5055">12.00</div>
<div class="t" style="left:515.5px;width:400px;text-align:right;top:114.6px;font-size:20px;color:#4b5055">60,550.9</div>
<div class="t" style="left:648.5px;width:400px;text-align:right;top:114.6px;font-size:20px;color:#4b5055">45880.28</div>
<div class="t" style="left:769.5px;width:400px;text-align:right;top:114.6px;font-size:20px;color:#4b5055">14670.65</div>
<div class="t" style="left:995.5px;width:400px;text-align:right;top:114.6px;font-size:20px;color:#4b5055">6206.81</div>
<div class="t" style="left:1278.0px;width:400px;text-align:right;top:114.6px;font-size:20px;color:#4b5055">403.04</div>
<div class="t" style="left:-262.0px;width:600px;text-align:center;top:148.6px;font-size:20px;color:#4b5055">4</div>
<div class="t" style="left:112.5px;top:149.76px;font-size:20.4px;color:#4b5055">Sean Chai N</div>
<div class="t" style="left:220.5px;width:400px;text-align:right;top:148.6px;font-size:20px;color:#4b5055">45,134.2</div>
<div class="t" style="left:308.5px;width:400px;text-align:right;top:148.6px;font-size:20px;color:#4b5055">12.00</div>
<div class="t" style="left:515.5px;width:400px;text-align:right;top:148.6px;font-size:20px;color:#4b5055">59,566.3</div>
<div class="t" style="left:648.5px;width:400px;text-align:right;top:148.6px;font-size:20px;color:#4b5055">45134.23</div>
<div class="t" style="left:769.5px;width:400px;text-align:right;top:148.6px;font-size:20px;color:#4b5055">14432.10</div>
<div class="t" style="left:995.5px;width:400px;text-align:right;top:148.6px;font-size:20px;color:#4b5055">6105.89</div>
<div class="t" style="left:1278.0px;width:400px;text-align:right;top:148.6px;font-size:20px;color:#4b5055">396.49</div>
<div class="t" style="left:-262.0px;width:600px;text-align:center;top:182.6px;font-size:20px;color:#4b5055">5</div>
<div class="t" style="left:112.5px;top:183.76px;font-size:20.4px;color:#4b5055">Tengiz Kharatishvili N</div>
<div class="t" style="left:220.5px;width:400px;text-align:right;top:182.6px;font-size:20px;color:#4b5055">71,638.9</div>
<div class="t" style="left:308.5px;width:400px;text-align:right;top:182.6px;font-size:20px;color:#4b5055">12.00</div>
<div class="t" style="left:515.5px;width:400px;text-align:right;top:182.6px;font-size:20px;color:#4b5055">94,546.1</div>
<div class="t" style="left:648.5px;width:400px;text-align:right;top:182.6px;font-size:20px;color:#4b5055">71638.88</div>
<div class="t" style="left:769.5px;width:400px;text-align:right;top:182.6px;font-size:20px;color:#4b5055">22907.21</div>
<div class="t" style="left:995.5px;width:400px;text-align:right;top:182.6px;font-size:20px;color:#4b5055">9691.51</div>
<div class="t" style="left:1278.0px;width:400px;text-align:right;top:182.6px;font-size:20px;color:#4b5055">629.32</div>
<div class="t" style="left:-262.0px;width:600px;text-align:center;top:216.6px;font-size:20px;color:#4b5055">6</div>
<div class="t" style="left:112.5px;top:217.76px;font-size:20.4px;color:#4b5055">Zainal Arifin T</div>
<div class="t" style="left:220.5px;width:400px;text-align:right;top:216.6px;font-size:20px;color:#4b5055">81,019.6</div>
<div class="t" style="left:308.5px;width:400px;text-align:right;top:216.6px;font-size:20px;color:#4b5055">12.00</div>
<div class="t" style="left:515.5px;width:400px;text-align:right;top:216.6px;font-size:20px;color:#4b5055">106,926.4</div>
<div class="t" style="left:648.5px;width:400px;text-align:right;top:216.6px;font-size:20px;color:#4b5055">81019.61</div>
<div class="t" style="left:769.5px;width:400px;text-align:right;top:216.6px;font-size:20px;color:#4b5055">25906.79</div>
<div class="t" style="left:995.5px;width:400px;text-align:right;top:216.6px;font-size:20px;color:#4b5055">10960.56</div>
<div class="t" style="left:1278.0px;width:400px;text-align:right;top:216.6px;font-size:20px;color:#4b5055">711.72</div>
<div class="t" style="left:-262.0px;width:600px;text-align:center;top:250.6px;font-size:20px;color:#4b5055">7</div>
<div class="t" style="left:112.5px;top:251.76px;font-size:20.4px;color:#4b5055">Gail Erickson A</div>
<div class="t" style="left:220.5px;width:400px;text-align:right;top:250.6px;font-size:20px;color:#4b5055">146,923.0</div>
<div class="t" style="left:308.5px;width:400px;text-align:right;top:250.6px;font-size:20px;color:#4b5055">12.00</div>
<div class="t" style="left:515.5px;width:400px;text-align:right;top:250.6px;font-size:20px;color:#4b5055">193,903.0</div>
<div class="t" style="left:648.5px;width:400px;text-align:right;top:250.6px;font-size:20px;color:#4b5055">146923.00</div>
<div class="t" style="left:769.5px;width:400px;text-align:right;top:250.6px;font-size:20px;color:#4b5055">46980.02</div>
<div class="t" style="left:995.5px;width:400px;text-align:right;top:250.6px;font-size:20px;color:#4b5055">19876.16</div>
<div class="t" style="left:1278.0px;width:400px;text-align:right;top:250.6px;font-size:20px;color:#4b5055">1290.66</div>
<div class="t" style="left:-262.0px;width:600px;text-align:center;top:284.6px;font-size:20px;color:#4b5055">8</div>
<div class="t" style="left:112.5px;top:285.76px;font-size:20.4px;color:#4b5055">Jossef Goldberg H</div>
<div class="t" style="left:220.5px;width:400px;text-align:right;top:284.6px;font-size:20px;color:#4b5055">148,541.1</div>
<div class="t" style="left:308.5px;width:400px;text-align:right;top:284.6px;font-size:20px;color:#4b5055">12.00</div>
<div class="t" style="left:515.5px;width:400px;text-align:right;top:284.6px;font-size:20px;color:#4b5055">196,038.6</div>
<div class="t" style="left:648.5px;width:400px;text-align:right;top:284.6px;font-size:20px;color:#4b5055">148541.15</div>
<div class="t" style="left:769.5px;width:400px;text-align:right;top:284.6px;font-size:20px;color:#4b5055">47497.43</div>
<div class="t" style="left:995.5px;width:400px;text-align:right;top:284.6px;font-size:20px;color:#4b5055">20095.07</div>
<div class="t" style="left:1278.0px;width:400px;text-align:right;top:284.6px;font-size:20px;color:#4b5055">1304.87</div>
<div class="t" style="left:-262.0px;width:600px;text-align:center;top:318.6px;font-size:20px;color:#4b5055">9</div>
<div class="t" style="left:112.5px;top:319.76px;font-size:20.4px;color:#4b5055">Michael Sullivan I</div>
<div class="t" style="left:220.5px;width:400px;text-align:right;top:318.6px;font-size:20px;color:#4b5055">161,213.8</div>
<div class="t" style="left:308.5px;width:400px;text-align:right;top:318.6px;font-size:20px;color:#4b5055">12.00</div>
<div class="t" style="left:515.5px;width:400px;text-align:right;top:318.6px;font-size:20px;color:#4b5055">212,763.4</div>
<div class="t" style="left:648.5px;width:400px;text-align:right;top:318.6px;font-size:20px;color:#4b5055">161213.80</div>
<div class="t" style="left:769.5px;width:400px;text-align:right;top:318.6px;font-size:20px;color:#4b5055">51549.64</div>
<div class="t" style="left:995.5px;width:400px;text-align:right;top:318.6px;font-size:20px;color:#4b5055">21809.46</div>
<div class="t" style="left:1278.0px;width:400px;text-align:right;top:318.6px;font-size:20px;color:#4b5055">1416.20</div>
<div class="t" style="left:-262.0px;width:600px;text-align:center;top:352.6px;font-size:20px;color:#4b5055">10</div>
<div class="t" style="left:112.5px;top:353.76px;font-size:20.4px;color:#4b5055">Roberto Tamburello</div>
<div class="t" style="left:220.5px;width:400px;text-align:right;top:352.6px;font-size:20px;color:#4b5055">200,574.3</div>
<div class="t" style="left:308.5px;width:400px;text-align:right;top:352.6px;font-size:20px;color:#4b5055">12.00</div>
<div class="t" style="left:515.5px;width:400px;text-align:right;top:352.6px;font-size:20px;color:#4b5055">264,709.8</div>
<div class="t" style="left:648.5px;width:400px;text-align:right;top:352.6px;font-size:20px;color:#4b5055">200574.28</div>
<div class="t" style="left:769.5px;width:400px;text-align:right;top:352.6px;font-size:20px;color:#4b5055">64135.52</div>
<div class="t" style="left:995.5px;width:400px;text-align:right;top:352.6px;font-size:20px;color:#4b5055">27134.26</div>
<div class="t" style="left:1278.0px;width:400px;text-align:right;top:352.6px;font-size:20px;color:#4b5055">1761.96</div>
<div class="t" style="left:-262.0px;width:600px;text-align:center;top:386.6px;font-size:20px;color:#4b5055">11</div>
<div class="t" style="left:112.5px;top:387.76px;font-size:20.4px;color:#4b5055">Sharon Salavaria B</div>
<div class="t" style="left:220.5px;width:400px;text-align:right;top:386.6px;font-size:20px;color:#4b5055">146,604.0</div>
<div class="t" style="left:308.5px;width:400px;text-align:right;top:386.6px;font-size:20px;color:#4b5055">12.00</div>
<div class="t" style="left:515.5px;width:400px;text-align:right;top:386.6px;font-size:20px;color:#4b5055">193,482.1</div>
<div class="t" style="left:648.5px;width:400px;text-align:right;top:386.6px;font-size:20px;color:#4b5055">146604.05</div>
<div class="t" style="left:769.5px;width:400px;text-align:right;top:386.6px;font-size:20px;color:#4b5055">46878.03</div>
<div class="t" style="left:995.5px;width:400px;text-align:right;top:386.6px;font-size:20px;color:#4b5055">19833.01</div>
<div class="t" style="left:1278.0px;width:400px;text-align:right;top:386.6px;font-size:20px;color:#4b5055">1287.86</div>
<div class="t" style="left:-262.0px;width:600px;text-align:center;top:420.6px;font-size:20px;color:#4b5055">12</div>
<div class="t" style="left:112.5px;top:421.76px;font-size:20.4px;color:#4b5055">Terri Duffy Lee</div>
<div class="t" style="left:220.5px;width:400px;text-align:right;top:420.6px;font-size:20px;color:#4b5055">268,287.7</div>
<div class="t" style="left:308.5px;width:400px;text-align:right;top:420.6px;font-size:20px;color:#4b5055">12.00</div>
<div class="t" style="left:515.5px;width:400px;text-align:right;top:420.6px;font-size:20px;color:#4b5055">354,075.3</div>
<div class="t" style="left:648.5px;width:400px;text-align:right;top:420.6px;font-size:20px;color:#4b5055">268287.72</div>
<div class="t" style="left:769.5px;width:400px;text-align:right;top:420.6px;font-size:20px;color:#4b5055">85787.53</div>
<div class="t" style="left:995.5px;width:400px;text-align:right;top:420.6px;font-size:20px;color:#4b5055">36294.73</div>
<div class="t" style="left:1278.0px;width:400px;text-align:right;top:420.6px;font-size:20px;color:#4b5055">2356.80</div>
<div class="t" style="left:-262.0px;width:600px;text-align:center;top:454.6px;font-size:20px;color:#4b5055">13</div>
<div class="t" style="left:112.5px;top:455.76px;font-size:20.4px;color:#4b5055">Ken Sánchez J</div>
<div class="t" style="left:220.5px;width:400px;text-align:right;top:454.6px;font-size:20px;color:#4b5055">538,917.8</div>
<div class="t" style="left:308.5px;width:400px;text-align:right;top:454.6px;font-size:20px;color:#4b5055">12.00</div>
<div class="t" style="left:515.5px;width:400px;text-align:right;top:454.6px;font-size:20px;color:#4b5055">711,241.8</div>
<div class="t" style="left:648.5px;width:400px;text-align:right;top:454.6px;font-size:20px;color:#4b5055">538917.76</div>
<div class="t" style="left:769.5px;width:400px;text-align:right;top:454.6px;font-size:20px;color:#4b5055">172324.04</div>
<div class="t" style="left:995.5px;width:400px;text-align:right;top:454.6px;font-size:20px;color:#4b5055">72906.33</div>
<div class="t" style="left:1278.0px;width:400px;text-align:right;top:454.6px;font-size:20px;color:#4b5055">4734.18</div>
<div class="t" style="left:-262.0px;width:600px;text-align:center;top:488.6px;font-size:20px;color:#4b5055">14</div>
<div class="t" style="left:112.5px;top:489.76px;font-size:20.4px;color:#4b5055">Laura Norman F</div>
<div class="t" style="left:220.5px;width:400px;text-align:right;top:488.6px;font-size:20px;color:#4b5055">274,490.6</div>
<div class="t" style="left:308.5px;width:400px;text-align:right;top:488.6px;font-size:20px;color:#4b5055">12.00</div>
<div class="t" style="left:515.5px;width:400px;text-align:right;top:488.6px;font-size:20px;color:#4b5055">362,261.5</div>
<div class="t" style="left:648.5px;width:400px;text-align:right;top:488.6px;font-size:20px;color:#4b5055">274490.59</div>
<div class="t" style="left:769.5px;width:400px;text-align:right;top:488.6px;font-size:20px;color:#4b5055">87770.96</div>
<div class="t" style="left:995.5px;width:400px;text-align:right;top:488.6px;font-size:20px;color:#4b5055">37133.87</div>
<div class="t" style="left:1278.0px;width:400px;text-align:right;top:488.6px;font-size:20px;color:#4b5055">2411.29</div>
<div class="t" style="left:-262.0px;width:600px;text-align:center;top:522.6px;font-size:20px;color:#4b5055">15</div>
<div class="t" style="left:112.5px;top:523.76px;font-size:20.4px;color:#4b5055">Christian Kleinerman E</div>
<div class="t" style="left:220.5px;width:400px;text-align:right;top:522.6px;font-size:20px;color:#4b5055">405.8</div>
<div class="t" style="left:308.5px;width:400px;text-align:right;top:522.6px;font-size:20px;color:#4b5055">3.00</div>
<div class="t" style="left:515.5px;width:400px;text-align:right;top:522.6px;font-size:20px;color:#4b5055">535.6</div>
<div class="t" style="left:648.5px;width:400px;text-align:right;top:522.6px;font-size:20px;color:#4b5055">405.81</div>
<div class="t" style="left:769.5px;width:400px;text-align:right;top:522.6px;font-size:20px;color:#4b5055">129.76</div>
<div class="t" style="left:995.5px;width:400px;text-align:right;top:522.6px;font-size:20px;color:#4b5055">54.90</div>
<div class="t" style="left:1278.0px;width:400px;text-align:right;top:522.6px;font-size:20px;color:#4b5055">3.56</div>
<div class="t" style="left:-262.0px;width:600px;text-align:center;top:556.6px;font-size:20px;color:#4b5055">16</div>
<div class="t" style="left:112.5px;top:557.76px;font-size:20.4px;color:#4b5055">Gary Altman E.</div>
<div class="t" style="left:220.5px;width:400px;text-align:right;top:556.6px;font-size:20px;color:#4b5055">105,880.2</div>
<div class="t" style="left:308.5px;width:400px;text-align:right;top:556.6px;font-size:20px;color:#4b5055">12.00</div>
<div class="t" style="left:515.5px;width:400px;text-align:right;top:556.6px;font-size:20px;color:#4b5055">139,736.4</div>
<div class="t" style="left:648.5px;width:400px;text-align:right;top:556.6px;font-size:20px;color:#4b5055">105880.20</div>
<div class="t" style="left:769.5px;width:400px;text-align:right;top:556.6px;font-size:20px;color:#4b5055">33856.19</div>
<div class="t" style="left:995.5px;width:400px;text-align:right;top:556.6px;font-size:20px;color:#4b5055">14323.77</div>
<div class="t" style="left:1278.0px;width:400px;text-align:right;top:556.6px;font-size:20px;color:#4b5055">930.12</div>
<div class="t" style="left:-262.0px;width:600px;text-align:center;top:590.6px;font-size:20px;color:#4b5055">17</div>
<div class="t" style="left:112.5px;top:591.76px;font-size:20.4px;color:#4b5055">Jo Brown I</div>
<div class="t" style="left:220.5px;width:400px;text-align:right;top:590.6px;font-size:20px;color:#4b5055">40,935.0</div>
<div class="t" style="left:308.5px;width:400px;text-align:right;top:590.6px;font-size:20px;color:#4b5055">12.00</div>
<div class="t" style="left:515.5px;width:400px;text-align:right;top:590.6px;font-size:20px;color:#4b5055">54,025.6</div>
<div class="t" style="left:648.5px;width:400px;text-align:right;top:590.6px;font-size:20px;color:#4b5055">40935.04</div>
<div class="t" style="left:769.5px;width:400px;text-align:right;top:590.6px;font-size:20px;color:#4b5055">13090.65</div>
<div class="t" style="left:995.5px;width:400px;text-align:right;top:590.6px;font-size:20px;color:#4b5055">5537.93</div>
<div class="t" style="left:1278.0px;width:400px;text-align:right;top:590.6px;font-size:20px;color:#4b5055">359.61</div>
<div class="a" style="left:424px;top:108px;width:206px;height:36px;border:3px solid #3f82f5"></div>
<div class="a" style="left:622px;top:136px;width:12px;height:12px;background:#3f82f5;border:2px solid #fff"></div>
</div>
<div class="a" style="left:1689px;top:408px;width:25px;height:597px;background:#f1f0ef"></div>
<div class="a" style="left:1691px;top:433px;width:21px;height:32px;background:#c1c1c1"></div>
<svg style="left:1696px;top:418px" width="11" height="7" viewBox="0 0 11 7"><path d="M0 6.2 H11 L5.5 0 Z" fill="#a3a3a3"/></svg>
<svg style="left:1696px;top:989px" width="11" height="7" viewBox="0 0 11 7"><path d="M0 0 H11 L5.5 6.2 Z" fill="#505357"/></svg>
<div class="a" style="left:16px;top:1005px;width:1673px;height:25px;background:#f1f0ef"></div>
<div class="a" style="left:41px;top:1007px;width:1312px;height:21px;background:#c1c1c1"></div>
<svg style="left:25px;top:1012px" width="7" height="11" viewBox="0 0 7 11"><path d="M6.4 0 V11 L0 5.5 Z" fill="#a3a3a3"/></svg>
<svg style="left:1674px;top:1012px" width="7" height="11" viewBox="0 0 7 11"><path d="M0 0 V11 L6.4 5.5 Z" fill="#505357"/></svg>
<div class="a" style="left:1689px;top:1005px;width:25px;height:25px;background:#dcdcdc"></div>
<svg style="left:280px;top:480px" width="30" height="36" viewBox="0 0 30 36"><path d="M6.5 6.3 L6.6 29.3 L11.6 25.2 L15.3 32.4 L19.6 30.3 L16.7 24.5 L23.9 23.9 Z" fill="#fff" stroke="#111" stroke-width="1.5" stroke-linejoin="round"/></svg>
</body></html>
